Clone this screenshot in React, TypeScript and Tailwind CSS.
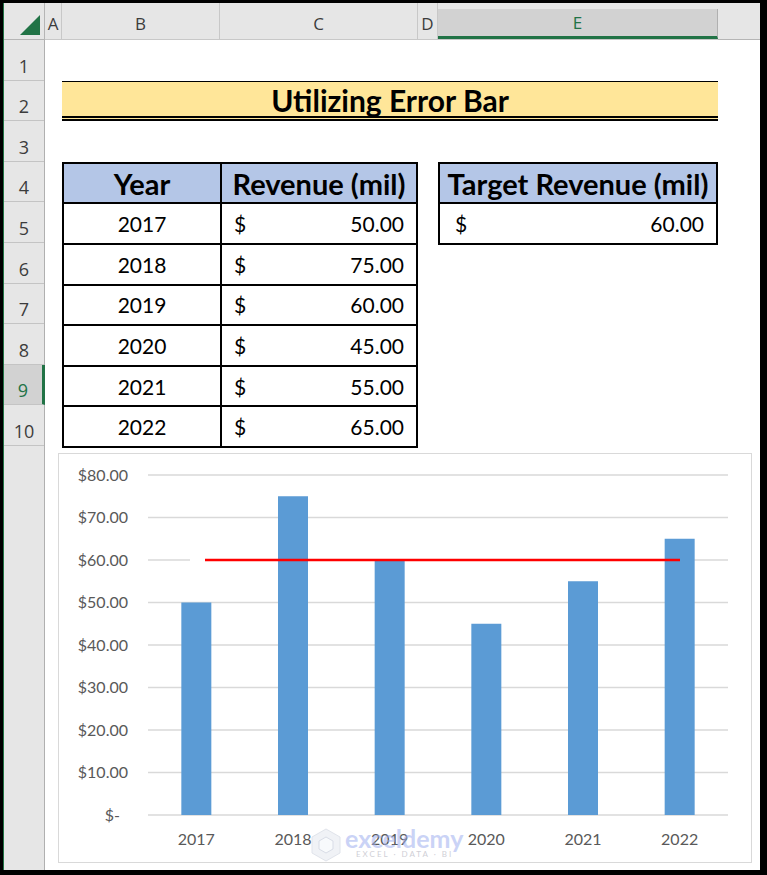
import React from "react";

const data = [
  { year: "2017", value: "50.00", n: 50 },
  { year: "2018", value: "75.00", n: 75 },
  { year: "2019", value: "60.00", n: 60 },
  { year: "2020", value: "45.00", n: 45 },
  { year: "2021", value: "55.00", n: 55 },
  { year: "2022", value: "65.00", n: 65 },
];

const rowNums = [1, 2, 3, 4, 5, 6, 7, 8, 9, 10];

function Chart() {
  const y0 = 362;
  const k = 4.25;
  const x0 = 90;
  const x1 = 670;
  const cw = (x1 - x0) / 6;
  const ticks = [80, 70, 60, 50, 40, 30, 20, 10, 0];
  return (
    <svg width={692} height={408} viewBox="1 1 692 408" className="block">
      {ticks.map((t) => (
        <line
          key={t}
          x1={x0}
          x2={x1}
          y1={y0 - t * k}
          y2={y0 - t * k}
          stroke="#d9d9d9"
          strokeWidth={1.3}
        />
      ))}
      {ticks.map((t) => (
        <text
          key={"l" + t}
          x={t === 0 ? 62 : 70}
          y={y0 - t * k + 5.5}
          textAnchor="end"
          fontFamily="Lato, sans-serif"
          fontSize={16}
          fill="#595959"
        >
          {t === 0 ? "$-" : `$${t}.00`}
        </text>
      ))}
      {data.map((d, i) => {
        const cx = x0 + cw * i + cw / 2;
        return (
          <g key={d.year}>
            <rect x={cx - 15} y={y0 - d.n * k} width={30} height={d.n * k} fill="#5b9bd5" />
            <text
              x={cx}
              y={392}
              textAnchor="middle"
              fontFamily="Lato, sans-serif"
              fontSize={16}
              fill="#595959"
            >
              {d.year}
            </text>
          </g>
        );
      })}
      <line x1={132} x2={147} y1={y0 - 60 * k} y2={y0 - 60 * k} stroke="#ffffff" strokeWidth={3} />
      <line x1={147} x2={622} y1={y0 - 60 * k} y2={y0 - 60 * k} stroke="#ff0000" strokeWidth={2.5} />
      {/* watermark */}
      <g opacity={0.55}>
        <polygon points="268,376 282,384 282,400 268,408 254,400 254,384" fill="#e4e8f0" stroke="#c8cedb" strokeWidth={1} />
        <polygon points="268,384 275,388 275,396 268,400 261,396 261,388" fill="#f4f6fa" stroke="#b9c1d3" strokeWidth={1} />
        <text x={287} y={395} fontFamily="Lato, sans-serif" fontSize={25} fontWeight={700} fill="#9fb0f0">
          exceldemy
        </text>
        <text x={298} y={404} fontFamily="Lato, sans-serif" fontSize={8} letterSpacing={2} fill="#a9a9b5">
          EXCEL · DATA · BI
        </text>
      </g>
    </svg>
  );
}

export default function App() {
  return (
    <div className="w-[767px] h-[875px] overflow-hidden bg-black pt-[3px] pl-[3px] pr-[7px] pb-[5px]">
      <div className="flex h-full flex-col border-l border-[#217346] bg-white">
        {/* column header row */}
        <div className="flex h-[37px] shrink-0 bg-[#e6e6e6] font-['Open_Sans',sans-serif] text-[17px] text-[#3c3c3c]">
          <div className="relative w-[41px] shrink-0 border-r border-b border-[#b5b5b5]">
            <svg width="20" height="20" viewBox="0 0 20 20" className="absolute left-[16px] top-[12px]">
              <polygon points="20,0 20,20 0,20" fill="#217346" />
            </svg>
          </div>
          <div className="flex w-[17px] shrink-0 items-center justify-center border-r border-b border-[#c8c8c8] pt-[6px]">A</div>
          <div className="flex w-[158px] shrink-0 items-center justify-center border-r border-b border-[#c8c8c8] pt-[6px]">B</div>
          <div className="flex w-[198px] shrink-0 items-center justify-center border-r border-b border-[#c8c8c8] pt-[6px]">C</div>
          <div className="flex w-[20px] shrink-0 items-center justify-center border-r border-b border-[#c8c8c8] pt-[6px]">D</div>
          <div className="flex w-[280px] shrink-0 flex-col border-b border-[#c8c8c8]">
            <div className="mt-[6px] flex flex-1 items-center justify-center border-r border-b-[3px] border-r-[#b0b0b0] border-b-[#217346] bg-[#d2d2d2] text-[#217346]">
              E
            </div>
          </div>
          <div className="flex-1 border-b border-[#b5b5b5]"></div>
        </div>

        <div className="flex flex-1">
          {/* row header */}
          <div className="flex w-[41px] shrink-0 flex-col border-r border-[#b0b0b0] bg-[#e6e6e6] font-['Open_Sans',sans-serif] text-[18px] leading-none text-[#3c3c3c]">
            {rowNums.map((r) => (
              <div
                key={r}
                className={
                  r === 9
                    ? "-mr-px flex h-[40.6px] items-end justify-center border-r-[3px] border-b border-r-[#217346] border-b-[#c4c4c4] bg-[#d2d2d2] pb-[5px] text-[#217346]"
                    : "flex h-[40.6px] items-end justify-center border-b border-[#c4c4c4] pb-[5px]"
                }
              >
                {r}
              </div>
            ))}
          </div>

          {/* sheet */}
          <div className="flex flex-1 flex-col font-['Lato',sans-serif] text-black">
            <div className="grid grid-cols-[17px_158px_198px_20px_280px_1fr] grid-rows-[repeat(10,40.6px)]">
              {/* title */}
              <div className="col-start-2 col-span-4 row-start-2 flex items-center justify-center border-t border-b-[5px] border-double border-t-black border-b-black bg-[#ffe699] pt-[2px] text-[30px] leading-none font-bold">
                Utilizing Error Bar
              </div>

              {/* main table */}
              <div className="col-start-2 col-span-2 row-start-4 row-span-7">
                <table className="w-full border-collapse">
                  <tbody>
                    <tr className="h-[40.6px] bg-[#b4c6e7] text-[29px] leading-none font-bold">
                      <td className="border-2 border-black p-0 text-center">Year</td>
                      <td className="border-2 border-black p-0 text-center">Revenue (mil)</td>
                    </tr>
                    {data.map((d) => (
                      <tr key={d.year} className="h-[40.6px] text-[21px] leading-none">
                        <td className="w-[158px] border-2 border-black p-0 text-center">{d.year}</td>
                        <td className="border-2 border-black px-[12px] py-0">
                          <div className="flex justify-between">
                            <span>$</span>
                            <span>{d.value}</span>
                          </div>
                        </td>
                      </tr>
                    ))}
                  </tbody>
                </table>
              </div>

              {/* target table */}
              <div className="col-start-5 row-start-4 row-span-2">
                <table className="w-full border-collapse">
                  <tbody>
                    <tr className="h-[40.6px] bg-[#b4c6e7] text-[29px] leading-none font-bold">
                      <td className="border-2 border-black p-0 text-center">Target Revenue (mil)</td>
                    </tr>
                    <tr className="h-[40.6px] text-[21px] leading-none">
                      <td className="border-2 border-black py-0 pl-[15px] pr-[12px]">
                        <div className="flex justify-between">
                          <span>$</span>
                          <span>60.00</span>
                        </div>
                      </td>
                    </tr>
                  </tbody>
                </table>
              </div>
            </div>

            {/* chart */}
            <div className="mt-[7px] ml-[13px] h-[410px] w-[694px] border border-[#d9d9d9] bg-white">
              <Chart />
            </div>
          </div>
        </div>
      </div>
    </div>
  );
}
